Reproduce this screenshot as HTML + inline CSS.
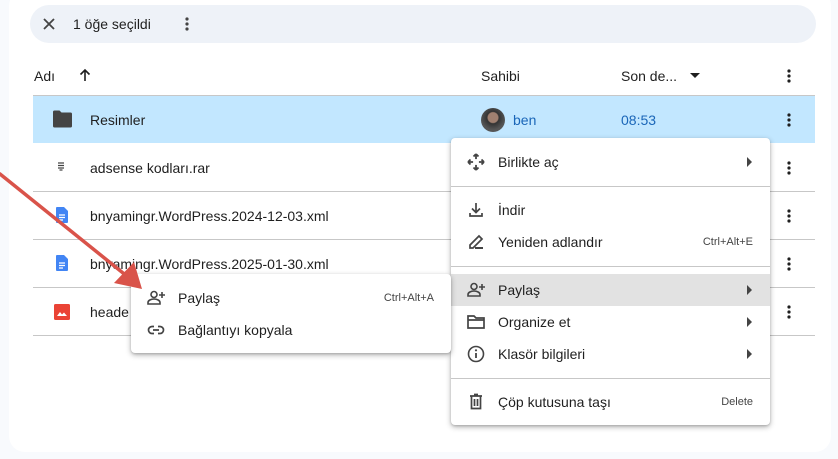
<!DOCTYPE html>
<html><head><meta charset="utf-8"><style>
*{margin:0;padding:0;box-sizing:border-box}
body{width:838px;height:459px;background:#f8fafd;font-family:"Liberation Sans",Arial,sans-serif;color:#1f1f1f;position:relative;overflow:hidden}
.card{position:absolute;left:9px;top:-10px;width:822px;height:462px;background:#fff;border-radius:16px}
.a{position:absolute}
.t{position:absolute;font-size:14px;white-space:nowrap}
.line{position:absolute;left:33px;width:782px;height:1px;background:#c7c7c7}
.dots{position:absolute;width:4px;height:14px}
.menu{position:absolute;background:#fff;border-radius:4px;box-shadow:0 2px 6px rgba(0,0,0,.3),0 1px 2px rgba(0,0,0,.15)}
.mi{position:absolute;left:0;right:0;height:32px}
.mi .l{position:absolute;left:47px;top:8px;font-size:14px;color:#1f1f1f}
.mi .k{position:absolute;right:17px;top:10px;font-size:11px;color:#444}
.mi svg.ic{position:absolute;left:15px;top:6px}
.mi .ar{position:absolute;right:18px;top:11px;width:0;height:0;border-left:5px solid #444;border-top:5px solid transparent;border-bottom:5px solid transparent}
.sep{position:absolute;left:0;right:0;height:1px;background:#c7c7c7}
</style></head><body>
<div class="card"></div>
<div class="a" style="left:30px;top:5px;width:786px;height:38px;background:#eef2f8;border-radius:19px"></div>
<svg class="a" style="left:42px;top:17px" width="14" height="14" viewBox="0 0 14 14"><path d="M2 2L12 12M12 2L2 12" stroke="#444" stroke-width="1.8"/></svg>
<div class="t" style="left:73px;top:16px;color:#1f1f1f">1 öğe seçildi</div>
<svg class="dots" style="left:185px;top:17px" viewBox="0 0 4 14"><circle cx="2" cy="2" r="1.6" fill="#444"/><circle cx="2" cy="7" r="1.6" fill="#444"/><circle cx="2" cy="12" r="1.6" fill="#444"/></svg>

<div class="t" style="left:34px;top:68px">Adı</div>
<svg class="a" style="left:78px;top:68px" width="14" height="14" viewBox="0 0 14 14"><path d="M7 13V2M2.5 6.5L7 2l4.5 4.5" stroke="#1f1f1f" stroke-width="1.6" fill="none"/></svg>
<div class="t" style="left:481px;top:68px">Sahibi</div>
<div class="t" style="left:621px;top:68px">Son de...</div>
<div class="a" style="left:690px;top:73px;border-top:5px solid #1f1f1f;border-left:5px solid transparent;border-right:5px solid transparent"></div>
<svg class="dots" style="left:787px;top:69px" viewBox="0 0 4 14"><circle cx="2" cy="2" r="1.6" fill="#1f1f1f"/><circle cx="2" cy="7" r="1.6" fill="#1f1f1f"/><circle cx="2" cy="12" r="1.6" fill="#1f1f1f"/></svg>

<div class="line" style="top:95px"></div>
<div class="a" style="left:33px;top:96px;width:782px;height:47px;background:#c2e7ff"></div>
<div class="line" style="top:191px"></div>
<div class="line" style="top:239px"></div>
<div class="line" style="top:287px"></div>
<div class="line" style="top:335px"></div>

<svg class="a" style="left:52px;top:110px" width="21" height="18" viewBox="0 0 21 18"><path d="M1 2a1.5 1.5 0 0 1 1.5-1.5h5l2 2h9A1.5 1.5 0 0 1 20 4v12a1.5 1.5 0 0 1-1.5 1.5h-16A1.5 1.5 0 0 1 1 16z" fill="#444"/></svg>
<div class="t" style="left:90px;top:112px">Resimler</div>
<div class="a" style="left:481px;top:108px;width:24px;height:24px;border-radius:50%;background:radial-gradient(circle at 50% 40%,#a08070 0 5px,#333 6px,#555 12px)"></div>
<div class="t" style="left:513px;top:112px;color:#0b57d0;color:#1a66b8">ben</div>
<div class="t" style="left:621px;top:112px;color:#1a66b8">08:53</div>
<svg class="dots" style="left:787px;top:113px" viewBox="0 0 4 14"><circle cx="2" cy="2" r="1.6" fill="#1f1f1f"/><circle cx="2" cy="7" r="1.6" fill="#1f1f1f"/><circle cx="2" cy="12" r="1.6" fill="#1f1f1f"/></svg>

<svg class="a" style="left:57px;top:162px" width="8" height="10" viewBox="0 0 8 10"><path d="M1 1h6M1 3.5h6M1 6h6M2.5 8h3" stroke="#444" stroke-width="1.2"/></svg>
<div class="t" style="left:90px;top:160px">adsense kodları.rar</div>
<svg class="dots" style="left:787px;top:161px" viewBox="0 0 4 14"><circle cx="2" cy="2" r="1.6" fill="#1f1f1f"/><circle cx="2" cy="7" r="1.6" fill="#1f1f1f"/><circle cx="2" cy="12" r="1.6" fill="#1f1f1f"/></svg>

<svg class="a" style="left:56px;top:207px" width="12" height="16" viewBox="0 0 12 16"><path d="M1 0h7l4 4v11a1 1 0 0 1-1 1H1a1 1 0 0 1-1-1V1a1 1 0 0 1 1-1z" fill="#4285f4"/><path d="M3 8h6M3 10.5h6M3 13h4" stroke="#fff" stroke-width="1.2"/></svg>
<div class="t" style="left:90px;top:208px">bnyamingr.WordPress.2024-12-03.xml</div>
<svg class="dots" style="left:787px;top:209px" viewBox="0 0 4 14"><circle cx="2" cy="2" r="1.6" fill="#1f1f1f"/><circle cx="2" cy="7" r="1.6" fill="#1f1f1f"/><circle cx="2" cy="12" r="1.6" fill="#1f1f1f"/></svg>

<svg class="a" style="left:56px;top:255px" width="12" height="16" viewBox="0 0 12 16"><path d="M1 0h7l4 4v11a1 1 0 0 1-1 1H1a1 1 0 0 1-1-1V1a1 1 0 0 1 1-1z" fill="#4285f4"/><path d="M3 8h6M3 10.5h6M3 13h4" stroke="#fff" stroke-width="1.2"/></svg>
<div class="t" style="left:90px;top:256px">bnyamingr.WordPress.2025-01-30.xml</div>
<svg class="dots" style="left:787px;top:257px" viewBox="0 0 4 14"><circle cx="2" cy="2" r="1.6" fill="#1f1f1f"/><circle cx="2" cy="7" r="1.6" fill="#1f1f1f"/><circle cx="2" cy="12" r="1.6" fill="#1f1f1f"/></svg>

<svg class="a" style="left:54px;top:304px" width="16" height="16" viewBox="0 0 16 16"><rect width="16" height="16" rx="1.5" fill="#ea4335"/><path d="M3 12l3-4 2 2.5 2-2 3 3.5z" fill="#fff"/></svg>
<div class="t" style="left:90px;top:304px">heade</div>
<svg class="dots" style="left:787px;top:305px" viewBox="0 0 4 14"><circle cx="2" cy="2" r="1.6" fill="#1f1f1f"/><circle cx="2" cy="7" r="1.6" fill="#1f1f1f"/><circle cx="2" cy="12" r="1.6" fill="#1f1f1f"/></svg>

<!-- main menu -->
<div class="menu" style="left:451px;top:138px;width:319px;height:287px">
 <div class="mi" style="top:8px"><svg class="ic" width="20" height="20" viewBox="0 0 20 20"><path d="M10 2v16M2 10h16M10 2l-2.5 2.5M10 2l2.5 2.5M10 18l-2.5-2.5M10 18l2.5-2.5M2 10l2.5-2.5M2 10l2.5 2.5M18 10l-2.5-2.5M18 10l-2.5 2.5" stroke="#444" stroke-width="1.8" fill="none"/><circle cx="10" cy="10" r="3" fill="#fff"/></svg><div class="l">Birlikte aç</div><div class="ar"></div></div>
 <div class="sep" style="top:48px"></div>
 <div class="mi" style="top:56px"><svg class="ic" width="20" height="20" viewBox="0 0 20 20"><path d="M10 3v9M6 8.5l4 4 4-4M4 13v3h12v-3" stroke="#444" stroke-width="1.7" fill="none"/></svg><div class="l">İndir</div></div>
 <div class="mi" style="top:88px"><svg class="ic" width="20" height="20" viewBox="0 0 20 20"><path d="M4 16v-3L13 4l3 3-9 9z" stroke="#444" stroke-width="1.7" fill="none"/><path d="M9 16h8" stroke="#444" stroke-width="2"/></svg><div class="l">Yeniden adlandır</div><div class="k">Ctrl+Alt+E</div></div>
 <div class="sep" style="top:128px"></div>
 <div class="mi" style="top:136px;background:#e2e2e2"><svg class="ic" width="20" height="20" viewBox="0 0 20 20"><circle cx="8" cy="6.5" r="3" stroke="#444" stroke-width="1.6" fill="none"/><path d="M2 16v-1.5c0-2 3-3.5 6-3.5s6 1.5 6 3.5V16z" stroke="#444" stroke-width="1.6" fill="none"/><path d="M16 4v6M13 7h6" stroke="#444" stroke-width="1.6"/></svg><div class="l">Paylaş</div><div class="ar"></div></div>
 <div class="mi" style="top:168px"><svg class="ic" width="20" height="20" viewBox="0 0 20 20"><path d="M2 4h6l2 2h8v10H2zM2 8h16" stroke="#444" stroke-width="1.7" fill="none"/></svg><div class="l">Organize et</div><div class="ar"></div></div>
 <div class="mi" style="top:200px"><svg class="ic" width="20" height="20" viewBox="0 0 20 20"><circle cx="10" cy="10" r="7.5" stroke="#444" stroke-width="1.6" fill="none"/><path d="M10 9v5" stroke="#444" stroke-width="1.8"/><circle cx="10" cy="6.3" r="1.1" fill="#444"/></svg><div class="l">Klasör bilgileri</div><div class="ar"></div></div>
 <div class="sep" style="top:240px"></div>
 <div class="mi" style="top:248px"><svg class="ic" width="20" height="20" viewBox="0 0 20 20"><path d="M4 4h12M8 2.5h4M5.5 4v12.5h9V4M8.5 7v7M11.5 7v7" stroke="#444" stroke-width="1.7" fill="none"/></svg><div class="l">Çöp kutusuna taşı</div><div class="k">Delete</div></div>
</div>

<!-- submenu -->
<div class="menu" style="left:131px;top:274px;width:320px;height:79px">
 <div class="mi" style="top:8px"><svg class="ic" width="20" height="20" viewBox="0 0 20 20"><circle cx="8" cy="6.5" r="3" stroke="#444" stroke-width="1.6" fill="none"/><path d="M2 16v-1.5c0-2 3-3.5 6-3.5s6 1.5 6 3.5V16z" stroke="#444" stroke-width="1.6" fill="none"/><path d="M16 4v6M13 7h6" stroke="#444" stroke-width="1.6"/></svg><div class="l">Paylaş</div><div class="k">Ctrl+Alt+A</div></div>
 <div class="mi" style="top:40px"><svg class="ic" width="20" height="20" viewBox="0 0 20 20"><path d="M8 6.5H6a3.5 3.5 0 0 0 0 7h2M12 6.5h2a3.5 3.5 0 0 1 0 7h-2M7 10h6" stroke="#444" stroke-width="1.7" fill="none"/></svg><div class="l">Bağlantıyı kopyala</div></div>
</div>

<!-- red arrow -->
<svg class="a" style="left:0;top:0" width="838" height="459" viewBox="0 0 838 459"><path d="M0 174L128 277" stroke="#d9534a" stroke-width="3.5" stroke-linecap="round"/><path d="M142 289L114 283L134 262z" fill="#d9534a"/></svg>
</body></html>
